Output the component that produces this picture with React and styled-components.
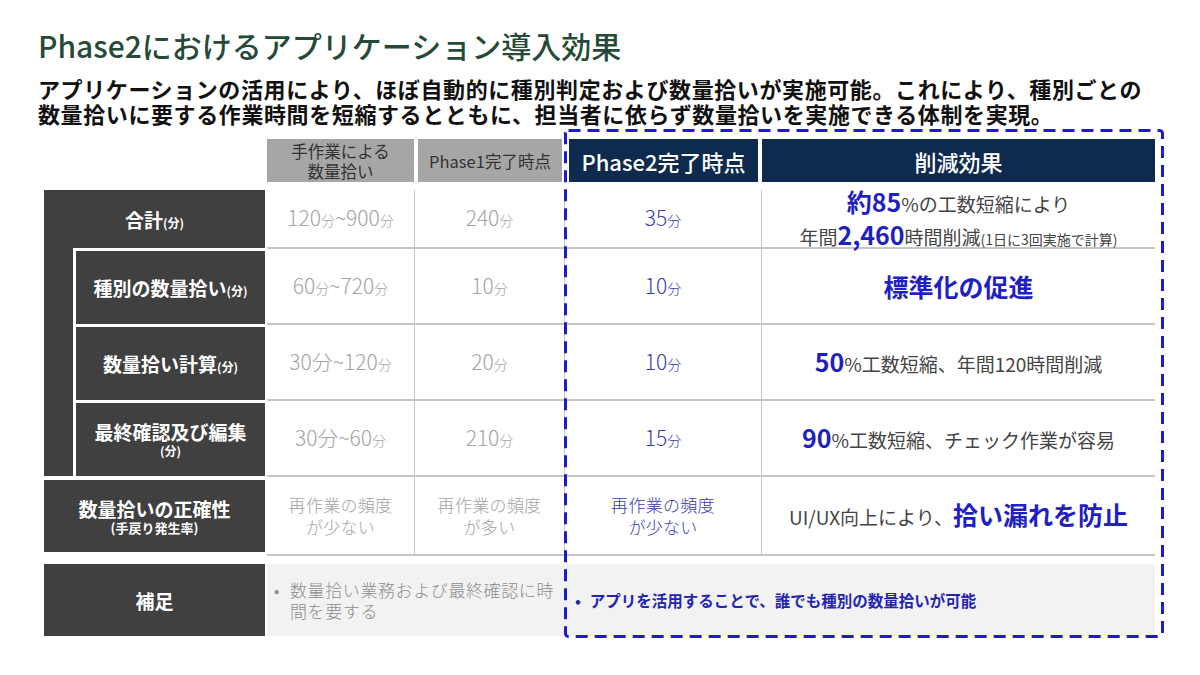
import React from "react";
import styled, { createGlobalStyle } from "styled-components";

const GlobalStyle = createGlobalStyle`
  body {
    margin: 0;
    background: #fff;
    font-family: "Noto Sans CJK JP", "Noto Sans", sans-serif;
  }
`;

const Page = styled.div`
  width: 1200px;
  height: 675px;
  padding: 25px 0 0 38px;
  box-sizing: border-box;
  overflow: hidden;
`;

const Title = styled.h1`
  margin: 0;
  font-size: 30px;
  line-height: 40px;
  font-weight: 500;
  color: #264a38;
`;

const Lead = styled.p`
  margin: 11px 0 0;
  font-size: 22px;
  line-height: 25px;
  letter-spacing: 0.6px;
  font-weight: 700;
  color: #111;
  white-space: nowrap;
`;

const TableWrap = styled.div`
  position: relative;
  margin: 13px 0 0 6px;
  width: 1111px;
`;

const Table = styled.div`
  display: grid;
  grid-template-columns: 29px 194px 148px 150px 197px 393px;
  grid-template-rows: 43px 8px 59px 76px 76px 76px 79px 8px 72px;
`;

const HeadCell = styled.div`
  grid-column: ${(p) => p.$col};
  grid-row: 1;
  margin: ${(p) => p.$margin || "0"};
  display: flex;
  align-items: center;
  justify-content: center;
  text-align: center;
  background: ${(p) => (p.$navy ? "#0f2a4f" : "#a6a6a6")};
  color: ${(p) => (p.$navy ? "#fff" : "#333")};
  font-size: ${(p) => (p.$navy ? "22px" : "16.5px")};
  font-weight: ${(p) => (p.$navy ? 500 : 400)};
  line-height: 20px;
`;

const Bracket = styled.div`
  grid-column: 1;
  grid-row: 3 / 7;
  margin-bottom: 1px;
  background: #404040;
`;

const Label = styled.div`
  grid-column: ${(p) => p.$col};
  grid-row: ${(p) => p.$row};
  margin: ${(p) => p.$margin || "0"};
  background: #404040;
  color: #fff;
  display: flex;
  flex-direction: column;
  align-items: center;
  justify-content: center;
  text-align: center;
  font-size: 19px;
  font-weight: 700;
  line-height: 23px;
`;

const Small = styled.span`
  font-size: ${(p) => p.$size || "12px"};
  line-height: 16px;
`;

const Cell = styled.div`
  grid-column: ${(p) => p.$col};
  grid-row: ${(p) => p.$row};
  display: flex;
  flex-direction: column;
  align-items: center;
  justify-content: center;
  text-align: center;
  border-bottom: 2px solid #c6c6c6;
  border-right: ${(p) => (p.$last ? "none" : "1px solid #c6c6c6")};
  color: ${(p) => (p.$blue ? "#3a3aa8" : "#a3a3a3")};
  font-size: 21px;
  font-weight: 300;
  line-height: 24px;
`;

const Unit = styled.span`
  font-size: 14px;
`;

const Note = styled.span`
  font-size: 17px;
  line-height: 22px;
  letter-spacing: 0.3px;
`;

const Effect = styled.div`
  grid-column: 6;
  grid-row: ${(p) => p.$row};
  display: flex;
  flex-direction: column;
  align-items: center;
  justify-content: center;
  border-bottom: 2px solid #c6c6c6;
  color: #444;
  font-size: 19px;
  font-weight: 400;
  line-height: 31px;
  white-space: nowrap;
`;

const Big = styled.span`
  color: #1f1fc2;
  font-size: 25px;
  font-weight: 700;
`;

const Remark = styled.div`
  grid-column: ${(p) => p.$col};
  grid-row: 9;
  background: #f2f2f2;
  display: flex;
  align-items: center;
  padding: ${(p) => p.$pad};
  color: ${(p) => (p.$blue ? "#2424b4" : "#8e8e8e")};
  font-size: ${(p) => (p.$blue ? "15.5px" : "17px")};
  font-weight: ${(p) => (p.$blue ? 700 : 300)};
  line-height: 21px;
  letter-spacing: ${(p) => (p.$blue ? "0" : "0.6px")};
`;

const Item = styled.div`
  display: flex;
  align-items: flex-start;
  gap: ${(p) => p.$gap};
`;

const DashBox = styled.svg`
  position: absolute;
  left: 520px;
  top: -10px;
  width: 600px;
  height: 509px;
  pointer-events: none;
  overflow: visible;
`;

const rows = [
  { row: 3, a: <>120<Unit>分</Unit>~900<Unit>分</Unit></>, b: <>240<Unit>分</Unit></>, c: <>35<Unit>分</Unit></> },
  { row: 4, a: <>60<Unit>分</Unit>~720<Unit>分</Unit></>, b: <>10<Unit>分</Unit></>, c: <>10<Unit>分</Unit></> },
  { row: 5, a: <>30分~120<Unit>分</Unit></>, b: <>20<Unit>分</Unit></>, c: <>10<Unit>分</Unit></> },
  { row: 6, a: <>30分~60<Unit>分</Unit></>, b: <>210<Unit>分</Unit></>, c: <>15<Unit>分</Unit></> },
];

export default function App() {
  return (
    <>
      <GlobalStyle />
      <Page>
        <Title>Phase2におけるアプリケーション導入効果</Title>
        <Lead>
          アプリケーションの活用により、ほぼ自動的に種別判定および数量拾いが実施可能。これにより、種別ごとの
          <br />
          数量拾いに要する作業時間を短縮するとともに、担当者に依らず数量拾いを実施できる体制を実現。
        </Lead>
        <TableWrap>
          <Table>
            <HeadCell $col={3} $margin="0 1px 0 0">手作業による<br />数量拾い</HeadCell>
            <HeadCell $col={4} $margin="0 3px 0 3px">Phase1完了時点</HeadCell>
            <HeadCell $col={5} $margin="0 4px 0 4px" $navy>Phase2完了時点</HeadCell>
            <HeadCell $col={6} $navy>削減効果</HeadCell>

            <Bracket />
            <Label $col="1 / 3" $row={3} $margin="0 2px 1px 0">
              <span>合計<Small>(分)</Small></span>
            </Label>
            <Label $col={2} $row={4} $margin="2px 2px 1px 3px">
              <span>種別の数量拾い<Small>(分)</Small></span>
            </Label>
            <Label $col={2} $row={5} $margin="2px 2px 1px 3px">
              <span>数量拾い計算<Small>(分)</Small></span>
            </Label>
            <Label $col={2} $row={6} $margin="2px 2px 1px 3px">
              <span>最終確認及び編集</span>
              <Small>(分)</Small>
            </Label>
            <Label $col="1 / 3" $row={7} $margin="3px 2px 4px 0">
              <span>数量拾いの正確性</span>
              <Small $size="13px">(手戻り発生率)</Small>
            </Label>
            <Label $col="1 / 3" $row={9} $margin="0 2px 0 0">補足</Label>

            {rows.map((r) => (
              <React.Fragment key={r.row}>
                <Cell $col={3} $row={r.row}><span>{r.a}</span></Cell>
                <Cell $col={4} $row={r.row}><span>{r.b}</span></Cell>
                <Cell $col={5} $row={r.row} $blue><span>{r.c}</span></Cell>
              </React.Fragment>
            ))}
            <Cell $col={3} $row={7}><Note>再作業の頻度<br />が少ない</Note></Cell>
            <Cell $col={4} $row={7}><Note>再作業の頻度<br />が多い</Note></Cell>
            <Cell $col={5} $row={7} $blue><Note>再作業の頻度<br />が少ない</Note></Cell>

            <Effect $row={3}>
              <span><Big>約85</Big>%の工数短縮により</span>
              <span>年間<Big>2,460</Big>時間削減<Small $size="14px">(1日に3回実施で計算)</Small></span>
            </Effect>
            <Effect $row={4}>
              <Big>標準化の促進</Big>
            </Effect>
            <Effect $row={5}>
              <span><Big>50</Big>%工数短縮、年間120時間削減</span>
            </Effect>
            <Effect $row={6}>
              <span><Big>90</Big>%工数短縮、チェック作業が容易</span>
            </Effect>
            <Effect $row={7}>
              <span>UI/UX向上により、<Big>拾い漏れを防止</Big></span>
            </Effect>

            <Remark $col="3 / 5" $pad="0 10px 0 7px">
              <Item $gap="10px">
                <span>•</span>
                <span>数量拾い業務および最終確認に時間を要する</span>
              </Item>
            </Remark>
            <Remark $col="5 / 7" $pad="0 0 0 10px" $blue>
              <Item $gap="9px">
                <span>•</span>
                <span>アプリを活用することで、誰でも種別の数量拾いが可能</span>
              </Item>
            </Remark>
          </Table>
          <DashBox viewBox="0 0 600 509">
            <rect x="1.5" y="1.5" width="597" height="506" rx="3" fill="none"
              stroke="#1c1cc8" strokeWidth="3" strokeDasharray="12 7" />
          </DashBox>
        </TableWrap>
      </Page>
    </>
  );
}
